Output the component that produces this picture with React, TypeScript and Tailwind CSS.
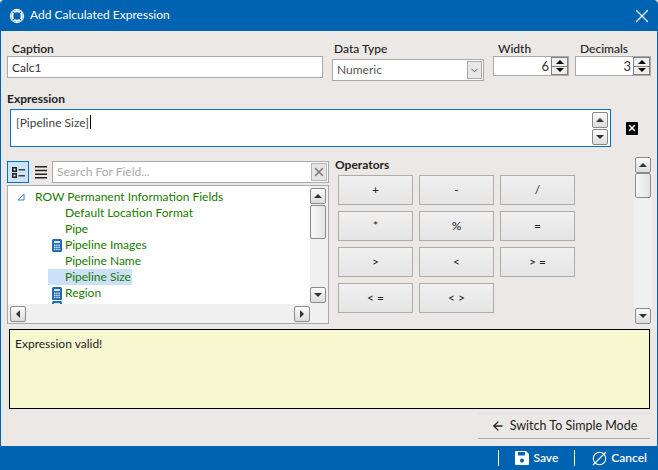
import { ArrowLeft, ChevronDown, CircleSlash2, X } from 'lucide-react';

const operators = ['+', '-', '/', '*', '%', '=', '>', '<', '> =', '< =', '< >'];

const fields = [
  { name: 'Default Location Format', calc: false },
  { name: 'Pipe', calc: false },
  { name: 'Pipeline Images', calc: true },
  { name: 'Pipeline Name', calc: false },
  { name: 'Pipeline Size', calc: false, selected: true },
  { name: 'Region', calc: true },
];

function Arrow({ dir, color = '#333' }: { dir: 'up' | 'down' | 'left' | 'right'; color?: string }) {
  const points = {
    up: '1,7 5,3 9,7',
    down: '1,3 9,3 5,7',
    left: '7,1 7,9 3,5',
    right: '3,1 3,9 7,5',
  }[dir];
  return (
    <svg width="10" height="10" viewBox="0 0 10 10">
      <polygon points={points} fill={color} />
    </svg>
  );
}

function ScrollBtn({ dir, className }: { dir: 'up' | 'down' | 'left' | 'right'; className: string }) {
  return (
    <div className={`flex shrink-0 items-center justify-center rounded-[2px] border border-[#8a8a8a] bg-gradient-to-b from-[#fbfbfb] to-[#dcdcdc] ${className}`}>
      <Arrow dir={dir} />
    </div>
  );
}

function CalcIcon({ clipped }: { clipped?: boolean }) {
  return (
    <svg width="10" height={clipped ? 3 : 13} viewBox={clipped ? '0 0 10 3' : '0 0 10 13'} className="shrink-0">
      <rect x="0" y="0" width="10" height="13" rx="1.5" fill="#1f6cb0" />
      <rect x="2" y="2" width="6" height="2" fill="#d7e6f4" />
      {[2, 4.2, 6.4].map((x) =>
        [5.5, 7.6, 9.7].map((y) => <rect key={`${x}-${y}`} x={x} y={y} width="1.5" height="1.4" fill="#d7e6f4" />)
      )}
    </svg>
  );
}

function Spinner({ value }: { value: string }) {
  return (
    <div className="flex h-[20px] w-full border border-[#a9a9a9] bg-white">
      <div className="flex-1 pr-[2px] text-right text-[13px] leading-[18px] text-[#333]">{value}</div>
      <div className="flex w-[17px] flex-col gap-px bg-[#808080] p-px">
        <div className="flex flex-1 items-center justify-center overflow-hidden bg-[#efefef]"><Arrow dir="up" color="#000" /></div>
        <div className="flex flex-1 items-center justify-center overflow-hidden bg-[#efefef]"><Arrow dir="down" color="#000" /></div>
      </div>
    </div>
  );
}

function Logo() {
  return (
    <svg width="16" height="16" viewBox="0 0 16 16">
      <circle cx="8" cy="8" r="7.2" fill="#dbe8f4" />
      <circle cx="8" cy="8" r="6" fill="#0063b1" />
      <circle cx="8" cy="8" r="4.8" fill="none" stroke="#fff" strokeWidth="2.2" />
      <circle cx="8" cy="8" r="2.2" fill="#0063b1" />
      <path d="M4.2 4.2l2 2M11.8 4.2l-2 2M4.2 11.8l2-2M11.8 11.8l-2-2" stroke="#0063b1" strokeWidth="1.2" />
    </svg>
  );
}

export default function App() {
  return (
    <div className="flex h-[470px] w-[658px] flex-col overflow-hidden rounded-t-[4px] border-x border-[#0063b1] bg-[#ece8e6] font-['Lato',sans-serif] text-[12px] text-[#222]">
      {/* Title bar */}
      <div className="flex h-[31px] shrink-0 items-center bg-[#0063b1] pl-[8px] pr-[4px] text-white">
        <Logo />
        <span className="ml-[5px] flex-1 -translate-y-px">Add Calculated Expression</span>
        <X size={22} strokeWidth={1.3} />
      </div>

      {/* Top fields */}
      <div className="flex h-[50px] shrink-0 pl-[6px]">
        <div className="w-[316px]">
          <div className="mt-[11px] pl-[5px] font-semibold leading-[14px]">Caption</div>
          <input readOnly value="Calc1" className="h-[22px] w-full border border-[#a9a9a9] bg-white px-[4px] text-[#333] outline-none" />
        </div>
        <div className="ml-[9px] w-[152px]">
          <div className="mt-[11px] pl-[2px] font-medium leading-[14px]">Data Type</div>
          <div className="mt-[3px] flex h-[22px] items-center border border-[#a9a9a9] bg-white pl-[4px] pr-px text-[#555]">
            <span className="flex-1">Numeric</span>
            <div className="flex h-[18px] w-[15px] items-center justify-center border border-[#a9a9a9] bg-[#e8e8e8]">
              <ChevronDown size={11} color="#555" />
            </div>
          </div>
        </div>
        <div className="ml-[9px] w-[76px]">
          <div className="mt-[10px] pl-[5px] font-medium leading-[15px]">Width</div>
          <Spinner value="6" />
        </div>
        <div className="ml-[6px] w-[76px]">
          <div className="mt-[10px] pl-[5px] font-medium leading-[15px]">Decimals</div>
          <Spinner value="3" />
        </div>
      </div>

      {/* Expression */}
      <div className="mt-[10px] h-[15px] shrink-0 pl-[6px] font-bold leading-[15px]">Expression</div>
      <div className="mt-[3px] flex h-[38px] shrink-0 items-center pl-[9px]">
        <div className="flex h-[38px] w-[601px] border border-[#0072c6] bg-white">
          <div className="flex-1 px-[5px] pt-[3px] text-[#444]">
            [Pipeline Size]<span className="ml-px inline-block h-[14px] w-px translate-y-[2px] bg-black" />
          </div>
          <div className="flex flex-col justify-center gap-px pr-[2px]">
            <ScrollBtn dir="up" className="h-[16px] w-[16px]" />
            <ScrollBtn dir="down" className="h-[16px] w-[16px]" />
          </div>
        </div>
        <div className="ml-[15px] flex h-[13px] w-[12px] items-center justify-center rounded-[1px] bg-black">
          <X size={10} color="#fff" strokeWidth={3.5} />
        </div>
      </div>

      {/* Field picker and operators */}
      <div className="mt-[10px] flex h-[167px] shrink-0 pl-[6px]">
        <div className="flex w-[322px] flex-col pt-[4px]">
          <div className="flex h-[22px] items-center">
            <div className="flex h-[22px] w-[22px] items-center justify-center border border-[#0072c6] bg-[#cce4f7]">
              <svg width="13" height="11" viewBox="0 0 13 11">
                <path d="M0 0h5v5H0zM0 6h5v5H0z" fill="#222" />
                <path d="M1.5 1.5h2v2h-2zM1.5 7.5h2v2h-2z" fill="#cce4f7" />
                <path d="M6.5 2h6.5v1.4H6.5zM6.5 8h6.5v1.4H6.5z" fill="#444" />
              </svg>
            </div>
            <svg width="12" height="13" viewBox="0 0 12 13" className="ml-[6px]">
              <path d="M0 0h12v1.5H0zM0 3.7h12v1.5H0zM0 7.4h12v1.5H0zM0 11.1h12v1.5H0z" fill="#222" />
            </svg>
            <div className="ml-[5px] flex h-[22px] flex-1 items-center border border-[#a9a9a9] bg-white pl-[4px] pr-px">
              <span className="flex-1 text-[#aaa]">Search For Field...</span>
              <div className="flex h-[18px] w-[16px] items-center justify-center border border-[#b5b5b5] bg-[#e4e4e4]">
                <X size={14} color="#777" strokeWidth={2.5} />
              </div>
            </div>
          </div>

          <div className="mt-[2px] flex h-[139px] flex-col border border-[#a9a9a9] bg-white">
            <div className="flex min-h-0 flex-1">
              <div className="flex-1 overflow-hidden pl-[8px] pt-[3px] text-[#1a7a00]">
                <div className="flex h-[16px] items-center">
                  <svg width="8" height="8" viewBox="0 0 8 8" className="ml-px shrink-0">
                    <path d="M7 1v6H1z" fill="none" stroke="#3a7fc1" />
                  </svg>
                  <span className="ml-[10px] leading-[16px]">ROW Permanent Information Fields</span>
                </div>
                {fields.map((f) => (
                  <div key={f.name} className="flex h-[16px] items-center pl-[36px]">
                    <div className="flex h-[16px] w-[13px] shrink-0 items-center">{f.calc && <CalcIcon />}</div>
                    {f.selected ? (
                      <span className="-ml-[17px] bg-[#cce0fa] pl-[17px] pr-px leading-[16px]">{f.name}</span>
                    ) : (
                      <span className="leading-[16px]">{f.name}</span>
                    )}
                  </div>
                ))}
                <div className="flex h-[3px] pl-[36px]"><CalcIcon clipped /></div>
              </div>
              <div className="flex w-[18px] shrink-0 flex-col bg-[#f0f0f0] pr-[2px] pt-[2px]">
                <ScrollBtn dir="up" className="h-[16px] w-[16px]" />
                <div className="mt-px h-[34px] w-[16px] rounded-[2px] border border-[#8a8a8a] bg-gradient-to-r from-[#f7f7f7] to-[#e4e4e4]" />
                <div className="flex-1" />
                <ScrollBtn dir="down" className="mb-px h-[16px] w-[16px]" />
              </div>
            </div>
            <div className="flex h-[19px] shrink-0 items-center justify-between bg-[#f0f0f0] pl-[2px] pr-[18px]">
              <ScrollBtn dir="left" className="h-[16px] w-[16px]" />
              <ScrollBtn dir="right" className="h-[16px] w-[16px]" />
            </div>
          </div>
        </div>

        <div className="ml-[6px] flex-1 pt-[1px]">
          <div className="font-bold leading-[14px]">Operators</div>
          <div className="mt-[3px] grid w-[240px] grid-cols-3 gap-[6px] pl-[3px]">
            {operators.map((op) => (
              <div key={op} className="flex h-[30px] items-center justify-center border border-[#acacac] bg-gradient-to-b from-[#f0f0f0] to-[#e5e5e5] text-[#222]">{op}</div>
            ))}
          </div>
        </div>

        <div className="mr-[5px] flex w-[18px] shrink-0 flex-col bg-[#f0f0f0] px-px">
          <ScrollBtn dir="up" className="h-[16px] w-[16px]" />
          <div className="h-[25px] w-[16px] rounded-[2px] border border-[#8a8a8a] bg-gradient-to-r from-[#f7f7f7] to-[#e4e4e4]" />
          <div className="flex-1" />
          <ScrollBtn dir="down" className="h-[16px] w-[16px]" />
        </div>
      </div>

      {/* Validation message */}
      <div className="ml-[8px] mt-[5px] h-[80px] w-[641px] shrink-0 border border-black bg-[#f8f8d0] px-[5px] py-[5px] text-[#222]">Expression valid!</div>

      <div className="mt-[4px] flex h-[26px] shrink-0 justify-end pr-[7px]">
        <div className="flex w-[172px] items-center justify-center gap-[5px] border-b border-t border-b-[#a9a9a9] border-t-[#ddd] bg-[#ece8e6] text-[12.5px]">
          <ArrowLeft size={14} strokeWidth={2.2} />
          Switch To Simple Mode
        </div>
      </div>

      {/* Footer */}
      <div className="mt-[7px] flex h-[24px] shrink-0 items-center justify-end bg-[#0063b1] pr-[10px] font-semibold text-white">
        <div className="h-[16px] w-px bg-white" />
        <svg width="14" height="14" viewBox="0 0 14 14" className="ml-[16px]">
          <path d="M1 0h10l3 3v10a1 1 0 0 1-1 1H1a1 1 0 0 1-1-1V1a1 1 0 0 1 1-1z" fill="#fff" />
          <rect x="3" y="1" width="7" height="3.5" fill="#0063b1" />
          <circle cx="7" cy="9.5" r="2" fill="#0063b1" />
        </svg>
        <span className="ml-[5px]">Save</span>
        <div className="ml-[16px] h-[16px] w-px bg-white" />
        <CircleSlash2 size={15} strokeWidth={1.8} className="ml-[17px]" />
        <span className="ml-[4px]">Cancel</span>
      </div>
    </div>
  );
}
